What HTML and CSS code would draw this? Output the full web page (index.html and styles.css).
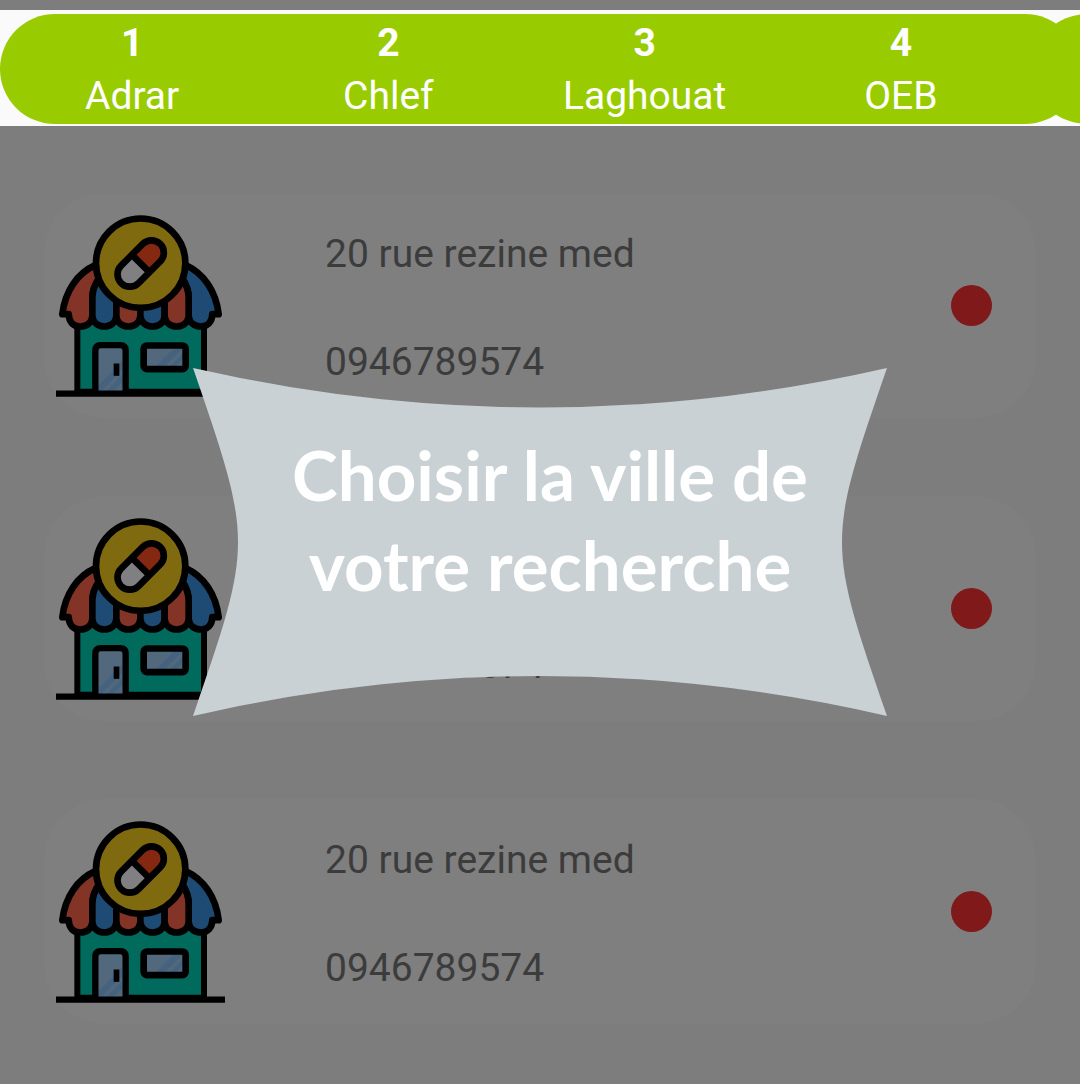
FILE: index.html
```html
<!DOCTYPE html>
<html lang="fr">
<head>
<meta charset="utf-8">
<meta name="viewport" content="width=device-width, initial-scale=1">
<title>Pharmacies</title>
<link rel="stylesheet" href="styles.css">
</head>
<body>
<svg class="sprite" aria-hidden="true">
  <symbol id="pharmacy" viewBox="48 62 507 545">
    <path d="M112 380H492V592H112Z" fill="#006a5c" stroke="#000" stroke-width="18"/>
    <path d="M166 592V468Q166 452 182 452H241Q257 452 257 468V592Z" fill="#52687d"/>
    <path d="M175 572L248 499V525L184 590H175ZM198 590L248 540V562L220 590Z" fill="#45637f"/>
    <path d="M166 592V468Q166 452 182 452H241Q257 452 257 468V592" fill="none" stroke="#000" stroke-width="19"/>
    <path d="M221 507H238V544H221Z"/>
    <rect x="311" y="453" width="126" height="71" rx="10" fill="#52687d"/>
    <path d="M347 517L404 460H430L373 517ZM388 517L430 476V493L406 517Z" fill="#45637f"/>
    <rect x="311" y="453" width="126" height="71" rx="10" fill="none" stroke="#000" stroke-width="20"/>
    <g stroke="#000" stroke-width="20" stroke-linejoin="round">
      <path d="M67 359C75 290 112 236 166 212L178 250Q157 280 157 310V365C155 385 140 396 121 396C100 396 87 383 86 359Z" fill="#833427"/>
      <path d="M536 359C528 290 491 236 438 212L426 250Q446 280 446 310V365C448 385 464 396 483 396C503 396 516 383 517 359Z" fill="#1d4b74"/>
      <path d="M157 310Q157 280 178 250L229 300V365C227 385 211 396 193 396C175 396 159 385 157 365Z" fill="#1d4b74"/>
      <path d="M229 300H301V365C299 385 284 396 265 396C247 396 231 385 229 365Z" fill="#833427"/>
      <path d="M301 300H374V365C372 385 356 396 338 396C320 396 303 385 301 365Z" fill="#1d4b74"/>
      <path d="M446 310Q446 280 426 250L374 300V365C376 385 392 396 410 396C428 396 444 385 446 365Z" fill="#833427"/>
      <circle cx="302" cy="206" r="134" fill="#806a10"/>
    </g>
    <g transform="rotate(45 302 207)">
      <path d="M265 207V161A37 37 0 0 1 339 161V207Z" fill="#842812"/>
      <path d="M265 207V253A37 37 0 0 0 339 253V207Z" fill="#808083"/>
      <path d="M265 207H339M265 161A37 37 0 0 1 339 161V253A37 37 0 0 1 265 253Z" fill="none" stroke="#000" stroke-width="20"/>
    </g>
    <path d="M48 588H555V607H48Z"/>
  </symbol>
</svg>

<nav class="cities" aria-label="Villes">
  <div class="city-group">
    <button class="city" type="button"><b>1</b><span>Adrar</span></button>
    <button class="city" type="button"><b>2</b><span>Chlef</span></button>
    <button class="city" type="button"><b>3</b><span>Laghouat</span></button>
    <button class="city" type="button"><b>4</b><span>OEB</span></button>
  </div>
  <div class="city-group" aria-hidden="true"></div>
</nav>

<main class="list">
  <article class="card">
    <svg class="shop" aria-hidden="true"><use href="#pharmacy"/></svg>
    <div class="details"><p>20 rue rezine med</p><p>0946789574</p></div>
    <span class="status"></span>
  </article>
  <article class="card">
    <svg class="shop" aria-hidden="true"><use href="#pharmacy"/></svg>
    <div class="details"><p>20 rue rezine med</p><p>0946789574</p></div>
    <span class="status"></span>
  </article>
  <article class="card">
    <svg class="shop" aria-hidden="true"><use href="#pharmacy"/></svg>
    <div class="details"><p>20 rue rezine med</p><p>0946789574</p></div>
    <span class="status"></span>
  </article>
</main>

<div class="overlay">
  <section class="bubble" role="dialog" aria-labelledby="hint">
    <svg class="bubble-shape" viewBox="0 0 694 348" preserveAspectRatio="none" aria-hidden="true">
      <path d="M0 0Q347 79 694 0C634 174 634 174 694 348Q347 268 0 348C60 174 60 174 0 0Z" fill="#c9d1d4"/>
    </svg>
    <h1 class="hint" id="hint">Choisir la ville de<br>votre recherche</h1>
  </section>
</div>
</body>
</html>
```
FILE: styles.css
```css
* {
  box-sizing: border-box;
}

body {
  margin: 0;
  padding-top: 10px;
  background: #7d7d7d;
  color: #3c3c3c;
  font-family: Roboto, "Liberation Sans", sans-serif;
  font-size: 39px;
  overflow-x: hidden;
}

p,
h1 {
  margin: 0;
}

.sprite {
  display: none;
}

.cities {
  display: flex;
  padding: 4px 0 2px;
  background: #fafafa;
  overflow: hidden;
}

.city-group {
  flex: none;
  display: grid;
  grid-template-columns: repeat(4, 1fr);
  width: 100%;
  min-height: 110px;
  padding: 3px 51px 1px 4px;
  border-radius: 55px;
  background: #9c0;
}

.city-group + .city-group {
  margin-left: -48px;
}

.city {
  display: flex;
  flex-direction: column;
  align-items: center;
  padding: 0;
  border: 0;
  background: none;
  color: #fff;
  font: inherit;
  line-height: 53px;
}

.list {
  display: flex;
  flex-direction: column;
  gap: 78px;
  padding: 67px 44px 60px;
}

.card {
  display: flex;
  align-items: center;
  min-height: 225px;
  padding: 0 44px 0 12px;
  border-radius: 60px;
  background: #7f7f7f;
}

.shop {
  flex: none;
  width: 169px;
  height: 182px;
}

.details {
  flex: 1;
  display: flex;
  flex-direction: column;
  gap: 62px;
  padding: 4px 0 0 100px;
  line-height: 46px;
}

.status {
  flex: none;
  width: 41px;
  height: 41px;
  border-radius: 50%;
  background: #7f191a;
}

.overlay {
  position: fixed;
  inset: 0;
  display: grid;
  place-items: center;
  pointer-events: none;
}

.bubble {
  display: grid;
  width: 694px;
  max-width: 100%;
}

.bubble-shape,
.hint {
  grid-area: 1 / 1;
}

.bubble-shape {
  width: 100%;
  height: 348px;
}

.hint {
  padding: 62px 0 0 20px;
  color: #fff;
  font-family: Lato, "Open Sans", sans-serif;
  font-size: 69px;
  font-weight: 700;
  line-height: 90px;
  text-align: center;
}
```
